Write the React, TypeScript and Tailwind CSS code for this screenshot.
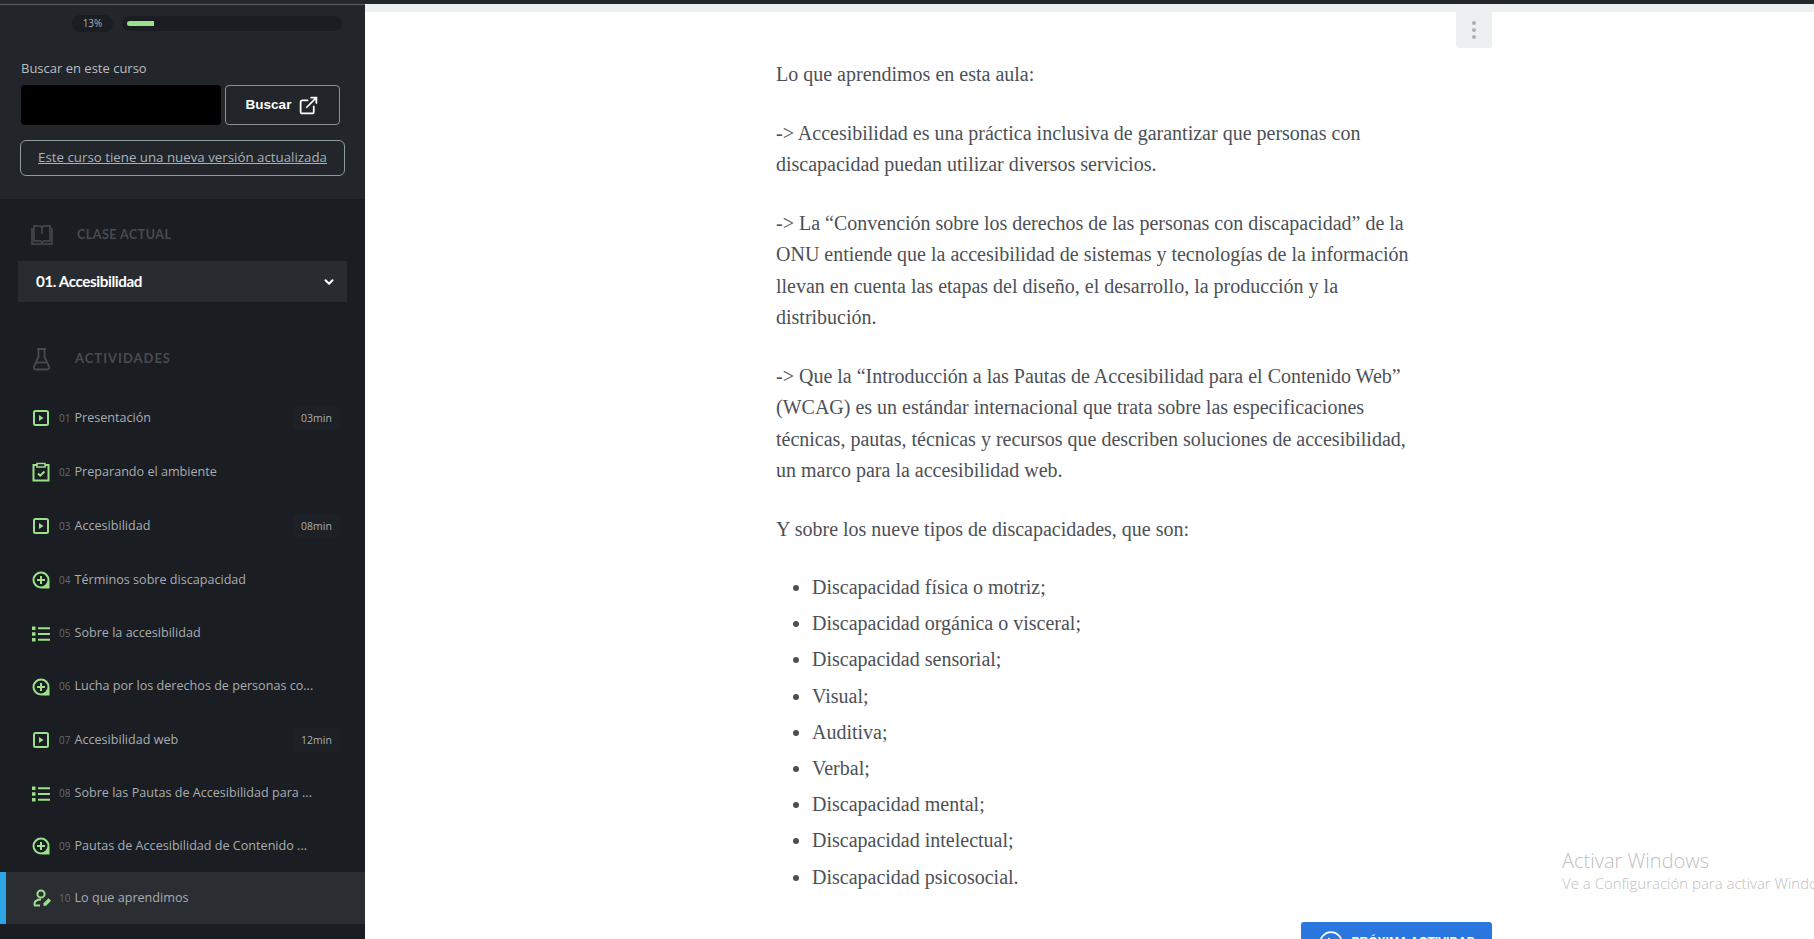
import React from 'react'
import { ChevronDown, CircleChevronRight, ExternalLink } from 'lucide-react'

type Kind = 'video' | 'task' | 'plus' | 'list' | 'user'

// Iconos del menú lateral
function ActivityIcon({ kind }: { kind: Kind }) {
  if (kind === 'video') {
    return (
      <svg width="18" height="18" viewBox="0 0 18 18" fill="none" className="shrink-0">
        <rect x="2" y="2" width="14" height="14" rx="1.5" stroke="#9be08a" strokeWidth="2" />
        <path d="M7 6l4.500 3L7 12z" fill="#9be08a" />
      </svg>
    )
  }
  if (kind === 'task') {
    return (
      <svg width="18" height="20" viewBox="0 0 18 20" fill="none" className="shrink-0">
        <path d="M5 3H1.500v15.500h15V3H13" stroke="#9be08a" strokeWidth="2" />
        <path d="M5 5V1.500h8V5z" stroke="#9be08a" strokeWidth="1.600" />
        <path d="M6 11.500l2.200 2.200L12.500 9.500" stroke="#9be08a" strokeWidth="2" />
      </svg>
    )
  }
  if (kind === 'plus') {
    return (
      <svg width="18" height="18" viewBox="0 0 18 18" fill="none" className="shrink-0">
        <path d="M10 17.500h7.500V10z" fill="#9be08a" />
        <circle cx="9" cy="9" r="7.500" fill="#1a1d21" stroke="#9be08a" strokeWidth="2" />
        <path d="M9 5v8M5 9h8" stroke="#9be08a" strokeWidth="2" />
      </svg>
    )
  }
  if (kind === 'list') {
    return (
      <svg width="18" height="16" viewBox="0 0 18 16" fill="none" className="shrink-0">
        <path d="M0 0.500h3.500v3.500H0zM0 6.200h3.500v3.500H0zM0 12h3.500v3.500H0z" fill="#9be08a" />
        <path d="M6 2.200h12M6 8h12M6 13.800h12" stroke="#9be08a" strokeWidth="2" />
      </svg>
    )
  }
  return (
    <svg width="20" height="18" viewBox="0 0 20 18" fill="none" className="shrink-0">
      <circle cx="8" cy="5" r="3.600" stroke="#9be08a" strokeWidth="2" />
      <path d="M1.500 16.500v-1.500c0-3 2.500-4.500 6.500-4.500" stroke="#9be08a" strokeWidth="2" />
      <path d="M1 16.500h6" stroke="#9be08a" strokeWidth="2" />
      <path d="M10.500 16.800v-2.600l5-5 2.600 2.600-5 5z" fill="#9be08a" />
    </svg>
  )
}

const activities: { n: string; title: string; kind: Kind; time?: string; height: string }[] = [
  { n: '01', title: 'Presentación', kind: 'video', time: '03min', height: 'h-[54px]' },
  { n: '02', title: 'Preparando el ambiente', kind: 'task', height: 'h-[54px]' },
  { n: '03', title: 'Accesibilidad', kind: 'video', time: '08min', height: 'h-[54px]' },
  { n: '04', title: 'Términos sobre discapacidad', kind: 'plus', height: 'h-[54px]' },
  { n: '05', title: 'Sobre la accesibilidad', kind: 'list', height: 'h-[53px]' },
  { n: '06', title: 'Lucha por los derechos de personas co...', kind: 'plus', height: 'h-[53px]' },
  { n: '07', title: 'Accesibilidad web', kind: 'video', time: '12min', height: 'h-[54px]' },
  { n: '08', title: 'Sobre las Pautas de Accesibilidad para ...', kind: 'list', height: 'h-[53px]' },
  { n: '09', title: 'Pautas de Accesibilidad de Contenido ...', kind: 'plus', height: 'h-[52px]' },
]

const discapacidades = [
  'Discapacidad física o motriz;',
  'Discapacidad orgánica o visceral;',
  'Discapacidad sensorial;',
  'Visual;',
  'Auditiva;',
  'Verbal;',
  'Discapacidad mental;',
  'Discapacidad intelectual;',
  'Discapacidad psicosocial.',
]

function Sidebar() {
  return (
    <aside className="w-[365px] shrink-0 bg-[#1a1d21] font-['Open_Sans',sans-serif]">
      {/* Progreso y búsqueda */}
      <div className="h-[195px] bg-[#22262a] border-t border-[#5a5f63] px-[20px]">
        <div className="flex items-center pt-[10px] pl-[52px] pr-[3px]">
          <span className="w-[41px] h-[17px] rounded-full bg-[#1a1d21] text-[10px] leading-[17px] text-center text-[#a8adb2]">13%</span>
          <div className="ml-[9px] flex-1 h-[15px] rounded-full bg-[#1a1d21] flex items-center pl-[5px]">
            <div className="w-[27px] h-[5px] rounded-l-full bg-[#9be08a]" />
          </div>
        </div>
        <p className="mt-[27px] pl-px text-[13px] leading-[18px] text-[#b9bec2]">Buscar en este curso</p>
        <div className="mt-[8px] flex gap-[4px] pl-px">
          <div className="w-[200px] h-[40px] rounded-[4px] bg-black" />
          <button className="w-[115px] h-[40px] rounded-[4px] border border-[#8d9296] flex items-center justify-center gap-[7px] text-white text-[13.500px] font-bold font-['Liberation_Sans',sans-serif]">
            Buscar
            <ExternalLink size={21} strokeWidth={2} />
          </button>
        </div>
        <a className="mt-[15px] w-[325px] h-[36px] rounded-[6px] border border-[#8d9a9f] flex items-center justify-center text-[13.300px] underline text-[#a5b2ba]">
          Este curso tiene una nueva versión actualizada
        </a>
      </div>

      {/* Clase actual */}
      <div className="flex items-center h-[24px] mt-[24px] pl-[31px]">
        <svg width="22" height="20" viewBox="0 0 22 20" fill="none" stroke="#474c50" strokeWidth="1.500" className="shrink-0">
          <path d="M1 3v16h20V3" />
          <path d="M3 16V1h6.500l1.500 2 1.500-2H19v15h-6.500L11 17.500 9.500 16z" />
          <path d="M11 4v5" />
        </svg>
        <span className="ml-[24px] text-[12.500px] font-bold tracking-[0.5px] text-[#474c50] font-['Lato',sans-serif]">CLASE ACTUAL</span>
      </div>
      <button className="mt-[14px] ml-[18px] w-[329px] h-[41px] bg-[#282c30] flex items-center justify-between pl-[18px] pr-[11px] text-white text-[15.200px] font-bold font-['Lato',sans-serif] tracking-[-0.4px]">
        01. Accesibilidad
        <ChevronDown size={14} strokeWidth={3.500} />
      </button>

      {/* Actividades */}
      <div className="flex items-center h-[24px] mt-[45px] pl-[33px]">
        <svg width="17" height="23" viewBox="0 0 17 23" fill="none" stroke="#474c50" strokeWidth="1.800" className="shrink-0">
          <path d="M4 1h9M5.500 1v8L1 18.500c-.6 1.500.3 3 2 3h11c1.700 0 2.600-1.500 2-3L11.500 9V1" />
          <path d="M3 14.500h11" />
        </svg>
        <span className="ml-[25px] text-[13px] font-bold tracking-[1px] text-[#474c50] font-['Lato',sans-serif]">ACTIVIDADES</span>
      </div>

      <ul className="mt-[20px]">
        {activities.map(a => (
          <li key={a.n} className={`flex items-center pl-[32px] pr-[25px] ${a.height}`}>
            <span className="w-[27px] shrink-0 flex"><ActivityIcon kind={a.kind} /></span>
            <span className="w-[15.500px] shrink-0 text-[10px] text-[#666b70]">{a.n}</span>
            <span className="flex-1 whitespace-nowrap text-[12.600px] text-[#a8adb2]">{a.title}</span>
            {a.time && (
              <span className="w-[47px] h-[24px] rounded-[4px] bg-[#1d2024] text-[10.500px] leading-[24px] text-center text-[#a8adb2]">{a.time}</span>
            )}
          </li>
        ))}
        <li className="flex items-center h-[52px] border-l-[6px] border-[#2ea5e6] bg-[#2a2d31] pl-[27px]">
          <span className="w-[26px] shrink-0 flex"><ActivityIcon kind="user" /></span>
          <span className="w-[15.500px] shrink-0 text-[10px] text-[#666b70]">10</span>
          <span className="text-[12.600px] text-[#a8adb2]">Lo que aprendimos</span>
        </li>
      </ul>
    </aside>
  )
}

export default function App() {
  return (
    <div className="relative w-full h-screen overflow-hidden bg-white flex flex-col">
      <div className="h-[4px] shrink-0 bg-[#24282c]" />
      <div className="flex flex-1 min-h-0">
        <Sidebar />
        <main className="flex-1 min-w-0">
          <div className="h-[8px] bg-[#ecf0f0]" />
          <div className="relative pl-[411px] pr-[322px] pt-[47px] font-['Liberation_Serif',serif] text-[20px] leading-[31.500px] text-[#4c5056]">
            <button className="absolute right-[322px] top-0 w-[36px] h-[36px] rounded-b-[3px] bg-[#ecf0f0] flex flex-col items-center justify-center gap-[3px]">
              <span className="w-[4px] h-[4px] rounded-full bg-[#a8b2b6]" />
              <span className="w-[4px] h-[4px] rounded-full bg-[#a8b2b6]" />
              <span className="w-[4px] h-[4px] rounded-full bg-[#a8b2b6]" />
            </button>
            <p>Lo que aprendimos en esta aula:</p>
            <p className="mt-[27px]">
              -&gt; Accesibilidad es una práctica inclusiva de garantizar que personas con<br />
              discapacidad puedan utilizar diversos servicios.
            </p>
            <p className="mt-[27px]">
              -&gt; La “Convención sobre los derechos de las personas con discapacidad” de la<br />
              ONU entiende que la accesibilidad de sistemas y tecnologías de la información<br />
              llevan en cuenta las etapas del diseño, el desarrollo, la producción y la<br />
              distribución.
            </p>
            <p className="mt-[27px]">
              -&gt; Que la “Introducción a las Pautas de Accesibilidad para el Contenido Web”<br />
              (WCAG) es un estándar internacional que trata sobre las especificaciones<br />
              técnicas, pautas, técnicas y recursos que describen soluciones de accesibilidad,<br />
              un marco para la accesibilidad web.
            </p>
            <p className="mt-[27px]">Y sobre los nueve tipos de discapacidades, que son:</p>
            <ul className="mt-[27px] pl-[36px] list-disc">
              {discapacidades.map(d => (
                <li key={d} className="mb-[4.700px]">{d}</li>
              ))}
            </ul>
            <div className="mt-[29px] flex justify-end">
              <button className="w-[191px] h-[42px] rounded-[3px] bg-[#2a77e0] flex items-center justify-center gap-[8px] text-white text-[12px] font-bold font-['Liberation_Sans',sans-serif]">
                <CircleChevronRight size={26} strokeWidth={1.500} />
                PRÓXIMA ACTIVIDAD
              </button>
            </div>
          </div>
        </main>
      </div>

      {/* Marca de agua de Windows */}
      <div className="absolute left-[1562px] top-[848px] whitespace-nowrap font-['Open_Sans',sans-serif] font-light text-[#c0c0c0]">
        <p className="text-[20px] leading-[25px]">Activar Windows</p>
        <p className="text-[15px] leading-[20px]">Ve a Configuración para activar Windows.</p>
      </div>
    </div>
  )
}
